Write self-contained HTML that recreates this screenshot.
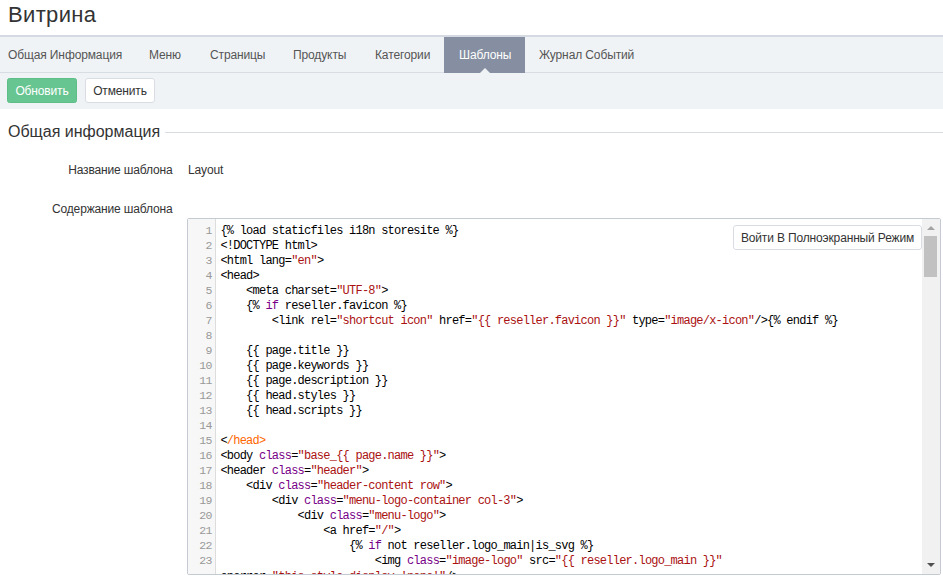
<!DOCTYPE html>
<html><head><meta charset="utf-8">
<style>
*{box-sizing:border-box;margin:0;padding:0}
html,body{width:943px;height:581px;overflow:hidden;background:#fff}
body{position:relative;font-family:"Liberation Sans",sans-serif;font-size:12px;color:#333}
.abs{position:absolute;white-space:pre;line-height:1}
#title{left:8px;top:3.6px;font-size:22px;letter-spacing:0.35px;color:#333}
#nav{position:absolute;left:0;top:35px;width:943px;height:38px;background:#f0f3f6;border-top:2px solid #d5dae2;border-bottom:1px solid #d8dde3}
.ni{position:absolute;top:12px;letter-spacing:-0.12px;color:#555;font-size:12px;line-height:1;white-space:pre}
#act{position:absolute;left:444px;top:0;width:81px;height:36px;background:#858fa1}
#act .tri{position:absolute;left:35.6px;bottom:0;width:0;height:0;border-left:5.5px solid transparent;border-right:5.5px solid transparent;border-bottom:5px solid #f0f3f6}
#tool{position:absolute;left:0;top:73px;width:943px;height:36px;background:#f0f3f6}
.btn{position:absolute;top:5px;height:25px;border-radius:3px;font-size:12px;line-height:25px;letter-spacing:-0.15px;text-align:center;white-space:pre}
#b1{left:7px;width:70px;background:#67c591;color:#fff;border:1px solid #5dbf87;border-radius:2.5px}
#b2{left:85px;width:70px;background:#fff;color:#333;border:1px solid #d9dde3}
#sect{left:8px;top:124px;font-size:16px;color:#333}
#sline{position:absolute;left:165px;top:132px;width:778px;height:1px;background:#d8dde3}
.lbl{position:absolute;font-size:12px;line-height:1;white-space:pre;color:#333;letter-spacing:-0.15px}
#ed{position:absolute;left:187px;top:218px;width:754px;height:357px;border:1px solid #c4cad2;border-radius:2px;background:#fff;overflow:hidden}
#gut{position:absolute;left:0;top:0;width:28px;height:100%;background:#f7f7f7;border-right:1px solid #ddd}
#code{position:absolute;left:0;top:5px;width:100%;height:400px;font-family:"Liberation Mono",monospace;font-size:12px;letter-spacing:-0.77px;line-height:15px}
.ln{position:absolute;left:0;width:24px;text-align:right;color:#999;font-family:"Liberation Mono",monospace;font-size:11.5px;letter-spacing:-0.47px;margin-top:-1px}
.cl{position:absolute;left:32.4px;white-space:pre;color:#000}
.t{color:#170}
.s{color:#a11}
.k{color:#708}
.o{color:#f60}
#fs{position:absolute;left:545px;top:6px;width:189px;height:25px;border:1px solid #d9dde3;border-radius:3px;background:#fff;font-size:12px;line-height:25px;letter-spacing:-0.15px;text-align:center;color:#333;white-space:pre}
#sb{position:absolute;right:0;top:0;width:18px;height:355px;background:#f1f1f1}
</style></head><body>
<div id="title" class="abs">Витрина</div>
<div id="nav">
  <div class="ni" style="left:8px">Общая Информация</div>
  <div class="ni" style="left:149px">Меню</div>
  <div class="ni" style="left:210px">Страницы</div>
  <div class="ni" style="left:293px">Продукты</div>
  <div class="ni" style="left:375px">Категории</div>
  <div id="act"><div class="ni" style="left:15px;color:#fff">Шаблоны</div><div class="tri"></div></div>
  <div class="ni" style="left:539px">Журнал Событий</div>
</div>
<div id="tool">
  <div class="btn" id="b1">Обновить</div>
  <div class="btn" id="b2">Отменить</div>
</div>
<div id="sect" class="abs">Общая информация</div>
<div id="sline"></div>
<div class="lbl" style="left:0;width:172.5px;text-align:right;top:164px">Название шаблона</div>
<div class="lbl" style="left:188px;top:164px">Layout</div>
<div class="lbl" style="left:0;width:172.5px;text-align:right;top:203px">Содержание шаблона</div>
<div id="ed">
  <div id="gut"></div>
  <div id="code">
<div class="ln" style="top:0px">1</div>
<div class="cl" style="top:0px">{% load staticfiles i18n storesite %}</div>
<div class="ln" style="top:15px">2</div>
<div class="cl" style="top:15px">&lt;!DOCTYPE html&gt;</div>
<div class="ln" style="top:30px">3</div>
<div class="cl" style="top:30px">&lt;html lang=<span class="s">&quot;en&quot;</span>&gt;</div>
<div class="ln" style="top:45px">4</div>
<div class="cl" style="top:45px">&lt;head&gt;</div>
<div class="ln" style="top:60px">5</div>
<div class="cl" style="top:60px">    &lt;meta charset=<span class="s">&quot;UTF-8&quot;</span>&gt;</div>
<div class="ln" style="top:75px">6</div>
<div class="cl" style="top:75px">    {% <span class="k">if</span> reseller.favicon %}</div>
<div class="ln" style="top:90px">7</div>
<div class="cl" style="top:90px">        &lt;link rel=<span class="s">&quot;shortcut icon&quot;</span> href=<span class="s">&quot;{{ reseller.favicon }}&quot;</span> type=<span class="s">&quot;image/x-icon&quot;</span>/&gt;{% endif %}</div>
<div class="ln" style="top:105px">8</div>
<div class="cl" style="top:105px"></div>
<div class="ln" style="top:120px">9</div>
<div class="cl" style="top:120px">    {{ page.title }}</div>
<div class="ln" style="top:135px">10</div>
<div class="cl" style="top:135px">    {{ page.keywords }}</div>
<div class="ln" style="top:150px">11</div>
<div class="cl" style="top:150px">    {{ page.description }}</div>
<div class="ln" style="top:165px">12</div>
<div class="cl" style="top:165px">    {{ head.styles }}</div>
<div class="ln" style="top:180px">13</div>
<div class="cl" style="top:180px">    {{ head.scripts }}</div>
<div class="ln" style="top:195px">14</div>
<div class="cl" style="top:195px"></div>
<div class="ln" style="top:210px">15</div>
<div class="cl" style="top:210px">&lt;<span class="o">/head&gt;</span></div>
<div class="ln" style="top:225px">16</div>
<div class="cl" style="top:225px">&lt;body <span class="k">class</span>=<span class="s">&quot;base_{{ page.name }}&quot;</span>&gt;</div>
<div class="ln" style="top:240px">17</div>
<div class="cl" style="top:240px">&lt;header <span class="k">class</span>=<span class="s">&quot;header&quot;</span>&gt;</div>
<div class="ln" style="top:255px">18</div>
<div class="cl" style="top:255px">    &lt;div <span class="k">class</span>=<span class="s">&quot;header-content row&quot;</span>&gt;</div>
<div class="ln" style="top:270px">19</div>
<div class="cl" style="top:270px">        &lt;div <span class="k">class</span>=<span class="s">&quot;menu-logo-container col-3&quot;</span>&gt;</div>
<div class="ln" style="top:285px">20</div>
<div class="cl" style="top:285px">            &lt;div <span class="k">class</span>=<span class="s">&quot;menu-logo&quot;</span>&gt;</div>
<div class="ln" style="top:300px">21</div>
<div class="cl" style="top:300px">                &lt;a href=<span class="s">&quot;/&quot;</span>&gt;</div>
<div class="ln" style="top:315px">22</div>
<div class="cl" style="top:315px">                    {% <span class="k">if</span> not reseller.logo_main|is_svg %}</div>
<div class="ln" style="top:330px">23</div>
<div class="cl" style="top:330px">                        &lt;img <span class="k">class</span>=<span class="s">&quot;image-logo&quot;</span> src=<span class="s">&quot;{{ reseller.logo_main }}&quot;</span></div>
<div class="cl" style="top:346px">onerror=<span class="s">&quot;this.style.display=&#x27;none&#x27;&quot;</span>/&gt;</div>
</div><!--endcode-->
  <div id="fs">Войти В Полноэкранный Режим</div>
  <div id="sb"><div style="position:absolute;left:4.5px;top:6.5px;width:0;height:0;border-left:4px solid transparent;border-right:4px solid transparent;border-bottom:4px solid #a3a3a3"></div><div style="position:absolute;left:2px;top:17px;width:13px;height:41px;background:#c1c1c1"></div><div style="position:absolute;left:4.5px;top:344px;width:0;height:0;border-left:4px solid transparent;border-right:4px solid transparent;border-top:4px solid #505050"></div></div>
</div>
</body></html>
